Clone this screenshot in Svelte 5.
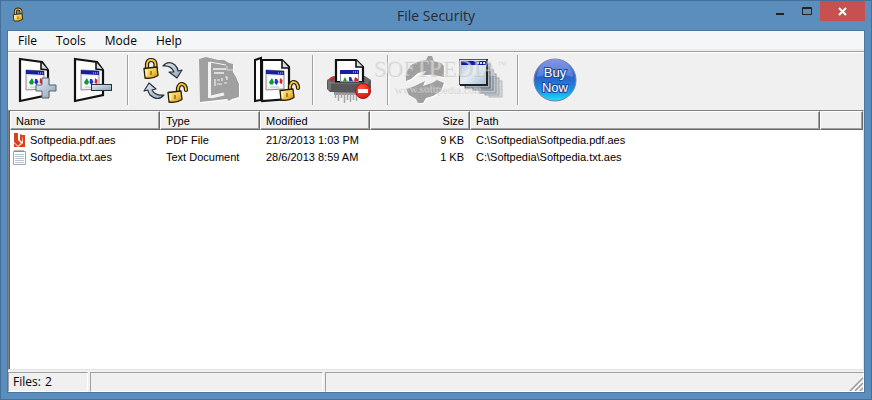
<script lang="ts">
	interface FileRow {
		name: string;
		kind: 'pdf' | 'txt';
		type: string;
		modified: string;
		size: string;
		path: string;
	}

	const menus = ['File', 'Tools', 'Mode', 'Help'];

	const files: FileRow[] = [
		{
			name: 'Softpedia.pdf.aes',
			kind: 'pdf',
			type: 'PDF File',
			modified: '21/3/2013 1:03 PM',
			size: '9 KB',
			path: 'C:\\Softpedia\\Softpedia.pdf.aes'
		},
		{
			name: 'Softpedia.txt.aes',
			kind: 'txt',
			type: 'Text Document',
			modified: '28/6/2013 8:59 AM',
			size: '1 KB',
			path: 'C:\\Softpedia\\Softpedia.txt.aes'
		}
	];

	const groups = [
		[
			{ id: 'add', label: 'Add files' },
			{ id: 'remove', label: 'Remove files' }
		],
		[
			{ id: 'swap', label: 'Encrypt or decrypt' },
			{ id: 'encrypt', label: 'Encrypt', disabled: true },
			{ id: 'decrypt', label: 'Decrypt' }
		],
		[{ id: 'shred', label: 'Shred files' }],
		[
			{ id: 'refresh', label: 'Refresh', disabled: true },
			{ id: 'windows', label: 'Windows' }
		],
		[{ id: 'buy', label: 'Buy Now' }]
	];

	// receding window frames, farthest first
	const frames = [
		{ x: 36, y: 29, right: 49, bottom: 45, fill: '#d3d7da', stroke: '#b4b8bc' },
		{ x: 32, y: 26, right: 46, bottom: 43, fill: '#c6ccd1', stroke: '#a4a9ad' },
		{ x: 27, y: 22, right: 43, bottom: 41, fill: '#bcc4cb', stroke: '#90969b' },
		{ x: 20, y: 18, right: 40, bottom: 38, fill: '#b0bbc5', stroke: '#767c82' },
		{ x: 12, y: 12, right: 37, bottom: 36, fill: '#a7b5c2', stroke: '#54595e' }
	];
</script>

{#snippet miniWindow()}
	<path d="M0 0 L18 1 V19 L0 20Z" fill="#eef0f4" stroke="#8e8e8e" />
	<path d="M0 0 L18 1 V5 L0 4Z" fill="#1420a0" />
	<path d="M12 3h5" stroke="#d8d8d8" stroke-dasharray="1 1" />
	<path d="M2 6h14v11h-14z" fill="#fff" />
	<path d="M6 8 L8 12 L7 14.5 L4 14.5 L3 12Z" fill="#109a3c" />
	<path d="M9 9 H11 L12.500 12 L10.500 15 L8.500 13Z" fill="#2030d0" />
	<path d="M14 8 L16.500 10 L16 14 L13.500 13Z" fill="#d82030" />
	<path d="M4 17h9" stroke="#c4c4c8" />
{/snippet}

{#snippet page()}
	<path d="M12 7 L34 10 L40 18 V43 L12 49Z" fill="#fcfcfc" stroke="#111" stroke-width="2.2" />
	<path d="M33 10 V17 L40 18" fill="#ddd" stroke="#111" stroke-width="1.6" />
	<g transform="translate(18 18)">{@render miniWindow()}</g>
{/snippet}

{#snippet flatPage()}
	<path d="M0 0 H20 L27 7 V39 L0 41Z" fill="#fcfcfc" stroke="#111" stroke-width="2.2" />
	<path d="M20 0 V8 H27" fill="#ddd" stroke="#111" stroke-width="1.6" />
	<g transform="translate(4 10)">{@render miniWindow()}</g>
{/snippet}

{#snippet lockBody()}
	<path d="M0 1.5 L13 0 L14 8.5 Q8 12.5 1 11Z" fill="url(#gold)" stroke="#2a1c00" stroke-width="1.3" stroke-linejoin="round" />
	<path d="M7 4v4" stroke="#9a6a10" stroke-width="1.5" />
	<path d="M2.5 3v6" stroke="#fff6c0" stroke-width="1.5" />
{/snippet}

{#snippet closedLock()}
	<path d="M3 10 V5 Q3.5 1 7 1 Q11 1 11.5 5 V10" fill="none" stroke="#2a1c00" stroke-width="4.2" />
	<path d="M3 10 V5 Q3.5 1 7 1 Q11 1 11.5 5 V10" fill="none" stroke="#efc84a" stroke-width="1.8" />
	<g transform="translate(0 8)">{@render lockBody()}</g>
{/snippet}

{#snippet openLock()}
	<path d="M10 9 V5 Q11 1 14 1 Q18 2 18 7" fill="none" stroke="#2a1c00" stroke-width="4.2" stroke-linecap="round" />
	<path d="M10 9 V5 Q11 1 14 1 Q18 2 18 7" fill="none" stroke="#efc84a" stroke-width="1.8" stroke-linecap="round" />
	<g transform="translate(0 8)">{@render lockBody()}</g>
{/snippet}

{#snippet encryptShape()}
	<path d="M6 7 L13 5 L25 8 H31 L36 11 L40 12 L40 20 L43 25 L46 32 L46 45 L39 47 L36 49 L34 47 L16 49 L7 50Z" />
{/snippet}

{#snippet refreshShape()}
	<path d="M8 29 V21 L13 13 L22 9 L28 8 L30 4 H34 L36 9 L43 11 L46 14 V25 L35 23 L25 23 L28 19 L20 21 L13 27Z" />
	<path d="M8 37 L17 34 L27 29 L25 34 L34 31 L39 28 L46 31 L43 39 L35 44 L28 46 L25 51 H20 L18 47 L11 43Z" />
{/snippet}

{#snippet icon(id: string)}
	<svg class="icon" viewBox="0 0 55 56" aria-hidden="true">
		{#if id === 'add'}
			{@render page()}
			<path d="M34 26h7v7h7v6h-7v7h-7v-7h-6v-6h6z" fill="url(#steel)" stroke="#54626e" />
		{:else if id === 'remove'}
			{@render page()}
			<rect x="28.500" y="32.500" width="20" height="6" fill="url(#steel)" stroke="#26313a" />
		{:else if id === 'swap'}
			<g transform="translate(6 7)">{@render closedLock()}</g>
			<g transform="translate(30 31)">{@render openLock()}</g>
			<path d="M25 14 Q30 8 37 13 Q40 16 40 19 L44 18 L39 26 L31 20 L36 20 Q33 13 25 14Z" fill="url(#steel)" stroke="#29333b" stroke-width="1.2" stroke-linejoin="round" />
			<path d="M26 43 Q20 50 12 43 Q10 40 10 38 L6 39 L11 31 L18 37 L14 38 Q17 44 26 43Z" fill="url(#steel)" stroke="#29333b" stroke-width="1.2" stroke-linejoin="round" />
		{:else if id === 'encrypt'}
			<g fill="#fff" transform="translate(1 1)">{@render encryptShape()}</g>
			<g fill="#a0a0a0">{@render encryptShape()}</g>
			<path d="M16.500 10 V46" stroke="#f4f4f4" stroke-width="3" />
			<path d="M17 10 L33 13" fill="none" stroke="#f4f4f4" />
			<path d="M34 14 V18 H40" fill="none" stroke="#d8d8d8" />
			<path d="M20 17 H33 M21 21 H31" stroke="#f0f0f0" stroke-width="1.5" />
			<path d="M18 45 L31 42" stroke="#f2f2f2" stroke-width="3" />
			<path d="M22 27v7M24 28h3M24 32h5M29 26v3M32 25h2v3M31 31h3" fill="none" stroke="#eee" stroke-width="1.2" />
		{:else if id === 'decrypt'}
			<path d="M7 8 L13 6 V48 L7 49Z" fill="#fff" stroke="#111" stroke-width="2" />
			<g transform="translate(14 8)">{@render flatPage()}</g>
			<g transform="translate(32 29)">{@render openLock()}</g>
		{:else if id === 'shred'}
			<path d="M4 28 L10 24 H42 L48 28 V34 H4Z" fill="#6a6a6c" />
			<path d="M13 30 V8 H33 L40 15 V30Z" fill="#fcfcfc" stroke="#111" stroke-width="2.2" />
			<path d="M33 8 V15 H40" fill="#ddd" stroke="#111" stroke-width="1.6" />
			<path d="M17.500 18.500h18v11h-18z" fill="#fff" stroke="#8e8e8e" />
			<path d="M17 18h19v4H17z" fill="#1420a0" />
			<path d="M30 20h5" stroke="#d8d8d8" stroke-dasharray="1 1" />
			<path d="M22 25l2 4h-4z" fill="#109a3c" />
			<path d="M26 25h2l2 4h-4z" fill="#2030d0" />
			<path d="M32 25l3 2v2h-4z" fill="#d82030" />
			<path d="M11 40h28v3H11z" fill="#9a9a9c" />
			<path d="M12.500 42v4M15.500 42v7M18.500 42v4M21.500 42v9M24.500 42v6M27.500 42v8M30.500 42v6M33.500 42v7" stroke="#a4a4a6" stroke-width="1.5" />
			<path d="M4 29 L7 31 H45 L48 28 V36 L44 41 L7 40 L4 37Z" fill="#58585a" />
			<path d="M5 30 L8 31 H45" fill="none" stroke="#858587" />
			<path d="M5 31h3v7H5z" fill="#747476" />
			<circle cx="9" cy="27" r="2" fill="#e02020" />
			<circle cx="40" cy="39" r="7.5" fill="url(#stop)" stroke="#a81010" />
			<rect x="35" y="37" width="10" height="4" fill="#fff" />
		{:else if id === 'refresh'}
			<g fill="#fff" transform="translate(1 1)">{@render refreshShape()}</g>
			<g fill="#a0a0a0">{@render refreshShape()}</g>
		{:else if id === 'windows'}
			{#each frames as f}
				<rect x={f.x} y={f.y} width={f.right - f.x} height={f.bottom - f.y} fill={f.fill} stroke={f.stroke} />
			{/each}
			<rect x="6.500" y="7.500" width="27" height="25" fill="url(#glass)" stroke="#555" />
			<rect x="8" y="9" width="25" height="4" fill="#1018a8" />
			<path d="M24 11h8" stroke="#ddd" stroke-width="2" stroke-dasharray="2 1" />
			<path d="M34 7v26H7" fill="none" stroke="#222" stroke-width="2" />
		{:else if id === 'buy'}
			<circle cx="27" cy="28" r="21" fill="url(#buyBlue)" stroke="#6c7fac" />
			<path d="M9 25 A18 18 0 0 1 45 25 Q27 18 9 25Z" fill="#fff" opacity="0.18" />
			<g class="buy-text" text-anchor="middle">
				<text x="27" y="25">Buy</text>
				<text x="27" y="40">Now</text>
			</g>
		{/if}
	</svg>
{/snippet}

<svg class="defs" width="0" height="0" aria-hidden="true">
	<defs>
		<linearGradient id="gold" x1="0" y1="0" x2="1" y2="1">
			<stop offset="0" stop-color="#fff0a0" />
			<stop offset="0.5" stop-color="#f3cc50" />
			<stop offset="1" stop-color="#c88c1c" />
		</linearGradient>
		<linearGradient id="steel" x1="0" y1="0" x2="1" y2="1">
			<stop offset="0" stop-color="#e8eef4" />
			<stop offset="1" stop-color="#8ba2b5" />
		</linearGradient>
		<linearGradient id="glass" x1="0" y1="0" x2="1" y2="1">
			<stop offset="0" stop-color="#b3c7dc" />
			<stop offset="0.5" stop-color="#e4edf5" />
			<stop offset="1" stop-color="#a9c2d8" />
		</linearGradient>
		<radialGradient id="stop" cx="0.4" cy="0.3" r="0.8">
			<stop offset="0" stop-color="#ff5548" />
			<stop offset="1" stop-color="#d80c0c" />
		</radialGradient>
		<linearGradient id="buyBlue" x1="0" y1="0" x2="0" y2="1">
			<stop offset="0" stop-color="#6a7ede" />
			<stop offset="0.45" stop-color="#2a62cc" />
			<stop offset="0.75" stop-color="#1496e4" />
			<stop offset="1" stop-color="#22e0f8" />
		</linearGradient>
	</defs>
</svg>

<div class="window">
	<header class="titlebar">
		<svg class="app-icon" viewBox="-2 -2 18 24" aria-hidden="true">{@render closedLock()}</svg>
		<h1>File Security</h1>
		<div class="controls">
			<button type="button" class="control" aria-label="Minimize">
				<svg viewBox="0 0 27 20"><rect x="10" y="12" width="8" height="2" fill="#222" /></svg>
			</button>
			<button type="button" class="control" aria-label="Maximize">
				<svg viewBox="0 0 27 20"><path d="M9.500 6.500h9v7h-9z M9 7.500h10" fill="none" stroke="#222" /></svg>
			</button>
			<button type="button" class="control close" aria-label="Close">
				<svg viewBox="0 0 45 20"><path d="M19 7 L26 14 M26 7 L19 14" stroke="#fff" stroke-width="2" /></svg>
			</button>
		</div>
	</header>

	<div class="client">
		<nav class="menubar">
			{#each menus as menu (menu)}
				<button type="button">{menu}</button>
			{/each}
		</nav>

		<div class="toolbar">
			{#each groups as group, i}
				{#if i > 0}<span class="separator"></span>{/if}
				{#each group as tool (tool.id)}
					<button type="button" class="tool" aria-label={tool.label} disabled={tool.disabled}>
						{@render icon(tool.id)}
					</button>
				{/each}
			{/each}
			<div class="watermark">
				<span class="brand">SOFTPEDIA<sup>™</sup></span>
				<span class="site">www.softpedia.com</span>
			</div>
		</div>

		<div class="list">
			<table>
				<colgroup>
					<col class="col-name" />
					<col class="col-type" />
					<col class="col-modified" />
					<col class="col-size" />
					<col class="col-path" />
					<col />
				</colgroup>
				<thead>
					<tr>
						<th>Name</th>
						<th>Type</th>
						<th>Modified</th>
						<th class="right">Size</th>
						<th>Path</th>
						<th></th>
					</tr>
				</thead>
				<tbody>
					{#each files as file (file.name)}
						<tr>
							<td class="name">
								<div class="name-inner">
									<svg class="file-icon" viewBox="0 0 14 16" aria-hidden="true">
										{#if file.kind === 'pdf'}
											<path d="M1 0h4v7l3 3-3 3-4-4z M7 1l2 1v7L7 7z M9 2h3v12H1v-4l4 4 5-4z" fill="#d8421c" />
										{:else}
											<path d="M.5 1.5h12v13H.5z" fill="#fff" stroke="#a5a5a5" />
											<path d="M2 0v2M4 0v2M6 0v2M8 0v2M10 0v2" stroke="#777" />
											<path d="M2 4.500h9M2 6.500h9M2 8.500h9M2 10.500h9M2 12.500h9" stroke="#b5c4cd" />
										{/if}
									</svg>
									<span>{file.name}</span>
								</div>
							</td>
							<td>{file.type}</td>
							<td>{file.modified}</td>
							<td class="right">{file.size}</td>
							<td>{file.path}</td>
							<td></td>
						</tr>
					{/each}
				</tbody>
			</table>
		</div>

		<footer class="statusbar">
			<div class="panel count"><span>Files:</span><span>{files.length}</span></div>
			<div class="panel message"></div>
			<div class="panel rest">
				<svg class="grip" viewBox="0 0 14 14" aria-hidden="true">
					<path d="M1 14 L14 1 M6 14 L14 6 M11 14 L14 11" stroke="#989898" stroke-width="1.5" />
					<path d="M3 14 L14 3 M8 14 L14 8" stroke="#fff" />
				</svg>
			</div>
		</footer>
	</div>
</div>

<style>
	:global(body) {
		margin: 0;
	}

	.defs {
		position: absolute;
	}

	.window {
		display: flex;
		flex-direction: column;
		box-sizing: border-box;
		min-height: 100vh;
		padding: 0 6px 6px;
		border: 1px solid #44709b;
		background: #5b8ebd;
		color: #000;
		font-family: 'Open Sans', 'Noto Sans', sans-serif;
		font-size: 12px;
	}

	button {
		padding: 0;
		border: 0;
		background: none;
		color: inherit;
		font: inherit;
	}

	.titlebar {
		display: grid;
		grid-template-columns: 1fr auto 1fr;
		align-items: start;
		height: 29px;
	}
	.app-icon {
		width: 12px;
		height: 16px;
		margin: 6px 0 0 5px;
	}
	h1 {
		margin: 0;
		color: #262b30;
		font-size: 14px;
		font-weight: 400;
		line-height: 29px;
	}
	.controls {
		display: flex;
		justify-content: flex-end;
	}
	.control {
		width: 27px;
		height: 20px;
	}
	.control svg {
		display: block;
		width: 100%;
		height: 100%;
	}
	.close {
		width: 45px;
		background: #c75050;
	}

	.client {
		display: flex;
		flex: 1;
		flex-direction: column;
		border: 1px solid #4a779f;
		background: #f0f0f0;
	}

	.menubar {
		display: flex;
		height: 18px;
		background: #f5f6f7;
		border-bottom: 2px solid #ececec;
	}
	.menubar button {
		padding: 0 9px 0 10px;
		line-height: 20px;
	}

	.toolbar {
		position: relative;
		display: flex;
		align-items: flex-start;
		height: 58px;
		border-top: 1px solid #a0a0a0;
		box-shadow: inset 0 1px #fff;
	}
	.tool {
		width: 55px;
		height: 56px;
	}
	.icon {
		display: block;
		width: 55px;
		height: 56px;
	}
	.separator {
		width: 1px;
		height: 50px;
		margin: 3px 9px;
		border-right: 1px solid #fff;
		background: #a0a0a0;
	}
	.buy-text {
		fill: #fff;
		stroke: #164a9c;
		stroke-width: 2px;
		paint-order: stroke;
		font-family: 'Liberation Sans', Arial, sans-serif;
		font-size: 13px;
	}

	.watermark {
		position: absolute;
		top: 4px;
		left: 365px;
		display: flex;
		flex-direction: column;
		color: rgb(225 225 225 / 50%);
		text-shadow: 1px 1px rgb(150 150 150 / 30%), -1px -1px rgb(255 255 255 / 30%);
		font-family: 'Liberation Serif', serif;
		pointer-events: none;
	}
	.brand {
		font-size: 23px;
		line-height: 26px;
	}
	.brand sup {
		font-size: 9px;
		line-height: 0;
	}
	.site {
		padding-left: 21px;
		font-size: 11px;
		line-height: 14px;
	}

	.list {
		flex: 1;
		border: 1px solid #828282;
		border-right-color: #e3e3e3;
		border-bottom-color: #e3e3e3;
		box-shadow: inset 1px 0 #606060;
		background: #fff;
		padding-left: 1px;
		font-family: 'Liberation Sans', Arial, sans-serif;
		font-size: 11px;
	}
	table {
		width: 100%;
		table-layout: fixed;
		border-collapse: separate;
		border-spacing: 0;
	}
	.col-name {
		width: 150px;
	}
	.col-type,
	.col-size {
		width: 100px;
	}
	.col-modified {
		width: 110px;
	}
	.col-path {
		width: 350px;
	}
	th {
		height: 16px;
		padding: 1px 5px 0;
		border: 1px solid #fff;
		border-right-color: #696969;
		border-bottom-color: #696969;
		background: #f0f0f0;
		box-shadow: inset -1px -1px #a0a0a0;
		font-weight: 400;
		text-align: left;
		line-height: 16px;
	}
	td {
		height: 17px;
		padding: 0 6px;
		line-height: 17px;
		white-space: nowrap;
	}
	tbody::before {
		content: '';
		display: block;
		height: 2px;
	}
	.right {
		text-align: right;
	}
	td.name {
		padding: 0 3px;
	}
	.name-inner {
		display: flex;
		align-items: center;
		gap: 3px;
	}
	.file-icon {
		width: 14px;
		height: 16px;
	}

	.statusbar {
		display: flex;
		gap: 2px;
		height: 20px;
		padding-top: 2px;
	}
	.panel {
		box-sizing: border-box;
		border: 1px solid #fff;
		border-top-color: #a0a0a0;
		border-left-color: #a0a0a0;
	}
	.count {
		display: flex;
		gap: 4px;
		width: 80px;
		padding-left: 4px;
		line-height: 18px;
	}
	.message {
		width: 233px;
	}
	.rest {
		display: flex;
		flex: 1;
		align-items: flex-end;
		justify-content: flex-end;
	}
	.grip {
		width: 14px;
		height: 14px;
	}
</style>
